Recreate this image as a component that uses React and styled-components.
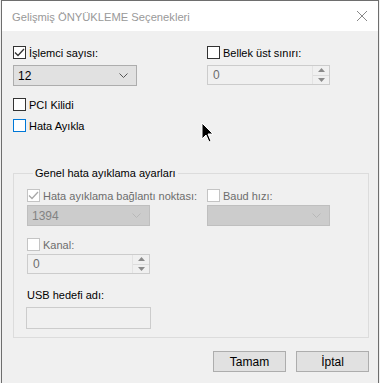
import React from "react";
import styled, { createGlobalStyle } from "styled-components";

const GlobalStyle = createGlobalStyle`
  html, body {
    margin: 0;
    padding: 0;
    background: #f0f0f0;
    overflow: hidden;
  }
  body {
    font-family: "Segoe UI", "Liberation Sans", Arial, sans-serif;
    font-size: 11px;
    color: #000;
  }
`;

const Window = styled.div`
  position: relative;
  box-sizing: border-box;
  width: 378px;
  height: 383px;
  margin-left: 1px;
  border: 1px solid #6e6e6e;
  border-bottom: none;
  background: #f0f0f0;
`;

const TitleBar = styled.div`
  height: 30px;
  background: #fff;
  display: flex;
  align-items: center;
  justify-content: space-between;
  padding: 0 10px 0 10px;
`;

const Title = styled.div`
  color: #999;
  font-size: 11.2px;
  padding-top: 1px;
`;

const CloseIcon = styled.svg`
  width: 10px;
  height: 10px;
  margin-right: 1px;
`;

const Body = styled.div`
  padding: 15px 9px 0 11px;
`;

const TopGrid = styled.div`
  display: grid;
  grid-template-columns: 124px 123px;
  column-gap: 70px;
  row-gap: 6px;
`;

const CheckRow = styled.label`
  display: flex;
  align-items: center;
  gap: 3px;
  height: 13px;
  color: ${(p) => (p.$disabled ? "#6d6d6d" : "#000")};
  white-space: nowrap;
`;

const Box = styled.span`
  box-sizing: border-box;
  width: 13px;
  height: 13px;
  flex: none;
  border: 1px solid
    ${(p) => (p.$focus ? "#0078d7" : p.$disabled ? "#c4c4c4" : "#333")};
  background: #fff;
  display: flex;
  align-items: center;
  justify-content: center;
`;

const Combo = styled.div`
  box-sizing: border-box;
  height: 21px;
  border: 1px solid ${(p) => (p.$disabled ? "#bfbfbf" : "#adadad")};
  background: ${(p) => (p.$disabled ? "#cccccc" : "#e1e1e1")};
  color: ${(p) => (p.$disabled ? "#838383" : "#000")};
  display: flex;
  align-items: center;
  justify-content: space-between;
  padding: 0 8px 0 4px;
  font-size: 12px;
`;

const Spin = styled.div`
  box-sizing: border-box;
  height: 20px;
  border: 1px solid #cccccc;
  background: #f0f0f0;
  color: #6d6d6d;
  display: flex;
  align-items: stretch;
  font-size: 12px;
`;

const SpinValue = styled.div`
  flex: 1;
  display: flex;
  align-items: center;
  padding-left: 5px;
`;

const SpinButtons = styled.div`
  width: 16px;
  display: flex;
  flex-direction: column;
  border-left: 1px solid #e3e3e3;
`;

const SpinButton = styled.div`
  flex: 1;
  display: flex;
  align-items: center;
  justify-content: center;
  & + & {
    border-top: 1px solid #dcdcdc;
  }
`;

const OptionList = styled.div`
  display: flex;
  flex-direction: column;
  gap: 8px;
  margin-top: 12px;
`;

const Group = styled.fieldset`
  box-sizing: border-box;
  margin: 34px 0 0 0;
  padding: 9px 13px 8px 13px;
  border: 1px solid #dcdcdc;
  width: 356px;
  min-inline-size: auto;
`;

const Legend = styled.legend`
  padding: 0 2px;
  margin-left: 6px;
  line-height: 14px;
`;

const GroupGrid = styled.div`
  display: grid;
  grid-template-columns: 123px 123px;
  column-gap: 57px;
  row-gap: 3px;
`;

const Spacer = styled.div`
  height: 12px;
`;

const Label = styled.div`
  height: 14px;
  line-height: 14px;
  margin-top: 14px;
  margin-bottom: 5px;
`;

const TextBox = styled.div`
  box-sizing: border-box;
  width: 125px;
  height: 22px;
  border: 1px solid #cccccc;
  background: #f0f0f0;
  margin-left: -1px;
`;

const Footer = styled.div`
  display: flex;
  justify-content: flex-end;
  gap: 10px;
  margin-top: 13px;
  padding-right: 0;
`;

const Button = styled.button`
  box-sizing: border-box;
  width: 73px;
  height: 21px;
  border: 1px solid #adadad;
  background: #e1e1e1;
  font: inherit;
  font-size: 12px;
  color: #000;
  padding: 0;
`;

const Cursor = styled.svg`
  position: absolute;
  left: 199px;
  top: 121px;
  width: 14px;
  height: 21px;
`;

const Check = ({ color }) => (
  <svg width="11" height="9" viewBox="0 0 11 9">
    <path d="M1 4.5 L4 7.5 L10 1" fill="none" stroke={color} strokeWidth="1.3" />
  </svg>
);

const Chevron = ({ color }) => (
  <svg width="9" height="5" viewBox="0 0 9 5">
    <path d="M0.5 0.5 L4.5 4.5 L8.5 0.5" fill="none" stroke={color} strokeWidth="1" />
  </svg>
);

const Arrow = ({ up }) => (
  <svg width="7" height="4" viewBox="0 0 7 4">
    <path d={up ? "M0 4 L3.5 0 L7 4 Z" : "M0 0 L7 0 L3.5 4 Z"} fill="#8a8a8a" />
  </svg>
);

const CheckBox = ({ label, checked, disabled, focus }) => (
  <CheckRow $disabled={disabled}>
    <Box $disabled={disabled} $focus={focus}>
      {checked && <Check color={disabled ? "#a8a8a8" : "#333"} />}
    </Box>
    {label}
  </CheckRow>
);

const SpinBox = ({ value }) => (
  <Spin>
    <SpinValue>{value}</SpinValue>
    <SpinButtons>
      <SpinButton>
        <Arrow up />
      </SpinButton>
      <SpinButton>
        <Arrow />
      </SpinButton>
    </SpinButtons>
  </Spin>
);

export default function App() {
  return (
    <>
      <GlobalStyle />
      <Window>
        <TitleBar>
          <Title>Gelişmiş ÖNYÜKLEME Seçenekleri</Title>
          <CloseIcon viewBox="0 0 10 10">
            <path d="M0 0 L10 10 M10 0 L0 10" stroke="#888" strokeWidth="1" />
          </CloseIcon>
        </TitleBar>
        <Body>
          <TopGrid>
            <CheckBox label="İşlemci sayısı:" checked />
            <CheckBox label="Bellek üst sınırı:" />
            <Combo>
              <span>12</span>
              <Chevron color="#555" />
            </Combo>
            <SpinBox value="0" />
          </TopGrid>
          <OptionList>
            <CheckBox label="PCI Kilidi" />
            <CheckBox label="Hata Ayıkla" focus />
          </OptionList>
          <Group>
            <Legend>Genel hata ayıklama ayarları</Legend>
            <GroupGrid>
              <CheckBox label="Hata ayıklama bağlantı noktası:" checked disabled />
              <CheckBox label="Baud hızı:" disabled />
              <Combo $disabled>
                <span>1394</span>
                <Chevron color="#b8b8b8" />
              </Combo>
              <Combo $disabled>
                <span />
                <Chevron color="#b8b8b8" />
              </Combo>
            </GroupGrid>
            <Spacer />
            <GroupGrid>
              <CheckBox label="Kanal:" disabled />
              <span />
              <SpinBox value="0" />
            </GroupGrid>
            <Label>USB hedefi adı:</Label>
            <TextBox />
          </Group>
          <Footer>
            <Button>Tamam</Button>
            <Button>İptal</Button>
          </Footer>
        </Body>
        <Cursor viewBox="0 0 14 21">
          <path
            d="M1 1 L1 17 L5 13 L8 20 L10 19 L7 12 L12 12 Z"
            fill="#000"
            stroke="#fff"
            strokeWidth="1"
          />
        </Cursor>
      </Window>
    </>
  );
}
